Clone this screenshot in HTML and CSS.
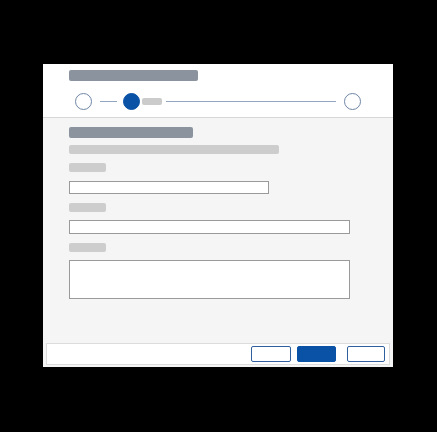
FILE: index.html
```html
<!DOCTYPE html>
<html>
<head>
<meta charset="utf-8">
<link rel="stylesheet" href="styles.css">
</head>
<body>
<div class="dialog">
  <div class="header">
    <div class="bar title-bar"></div>
    <div class="stepper">
      <span class="step"></span>
      <span class="line short"></span>
      <span class="step active"></span>
      <span class="pill"></span>
      <span class="line long"></span>
      <span class="step"></span>
    </div>
  </div>
  <div class="body">
    <div class="bar section-title"></div>
    <div class="bar subtitle"></div>
    <div class="bar label l1"></div>
    <div class="input input-half"></div>
    <div class="bar label l2"></div>
    <div class="input input-full"></div>
    <div class="bar label l3"></div>
    <div class="input textarea"></div>
  </div>
  <div class="footer-wrap">
    <div class="footer">
      <span class="btn btn-a"></span>
      <span class="btn btn-primary"></span>
      <span class="btn btn-c"></span>
    </div>
  </div>
</div>
</body>
</html>
```
FILE: styles.css
```css
html, body {
  margin: 0;
  padding: 0;
  background: #000;
  font-family: "Liberation Sans", Arial, sans-serif;
}
body {
  width: 437px;
  height: 432px;
  overflow: hidden;
}
.dialog {
  margin: 64px 0 0 43px;
  width: 350px;
  background: #f5f5f5;
  display: flex;
  flex-direction: column;
}
.header {
  background: #fff;
  height: 53px;
  border-bottom: 1px solid #d8d8d8;
  padding-left: 26px;
  display: flex;
  flex-direction: column;
}
.bar {
  border-radius: 2px;
}
.title-bar {
  margin-top: 6px;
  width: 129px;
  height: 11px;
  background: #8a939e;
}
.stepper {
  margin-top: 12px;
  margin-left: 6px;
  display: flex;
  align-items: center;
  height: 17px;
}
.step {
  width: 15px;
  height: 15px;
  border: 1px solid #6f86a6;
  border-radius: 50%;
  background: #fff;
  flex: none;
}
.step.active {
  background: #0a52a5;
  border-color: #0a52a5;
}
.line {
  height: 1px;
  background: #92a6c2;
  flex: none;
}
.line.short {
  width: 17px;
  margin: 0 6px 0 8px;
}
.line.long {
  width: 170px;
  margin: 0 8px 0 4px;
}
.pill {
  width: 20px;
  height: 7px;
  border-radius: 2px;
  background: #cbcbcb;
  margin-left: 2px;
  flex: none;
}
.body {
  height: 222px;
  box-sizing: border-box;
  padding: 9px 0 0 26px;
  display: flex;
  flex-direction: column;
}
.section-title {
  width: 124px;
  height: 11px;
  background: #8a939e;
}
.subtitle {
  margin-top: 7px;
  width: 210px;
  height: 9px;
  background: #cdcdcd;
}
.label {
  width: 37px;
  height: 9px;
  background: #cdcdcd;
  margin-top: 9px;
}
.input {
  background: #fff;
  border: 1px solid #9a9a9a;
  box-sizing: border-box;
}
.input-half {
  margin-top: 9px;
  width: 200px;
  height: 13px;
}
.input-full {
  margin-top: 8px;
  width: 281px;
  height: 14px;
}
.textarea {
  margin-top: 8px;
  width: 281px;
  height: 39px;
}
.footer-wrap {
  padding: 3px 3px 2px 3px;
}
.footer {
  height: 22px;
  box-sizing: border-box;
  background: #fff;
  border: 1px solid #dcdcdc;
  display: flex;
  justify-content: flex-end;
  align-items: center;
  padding-right: 4px;
}
.btn {
  height: 16px;
  box-sizing: border-box;
  border: 1.5px solid #2f5f9f;
  border-radius: 2px;
  background: #fff;
  flex: none;
}
.btn-a {
  width: 40px;
}
.btn-primary {
  width: 39px;
  margin-left: 6px;
  background: #0a52a5;
  border-color: #0a52a5;
}
.btn-c {
  width: 38px;
  margin-left: 11px;
}
```
